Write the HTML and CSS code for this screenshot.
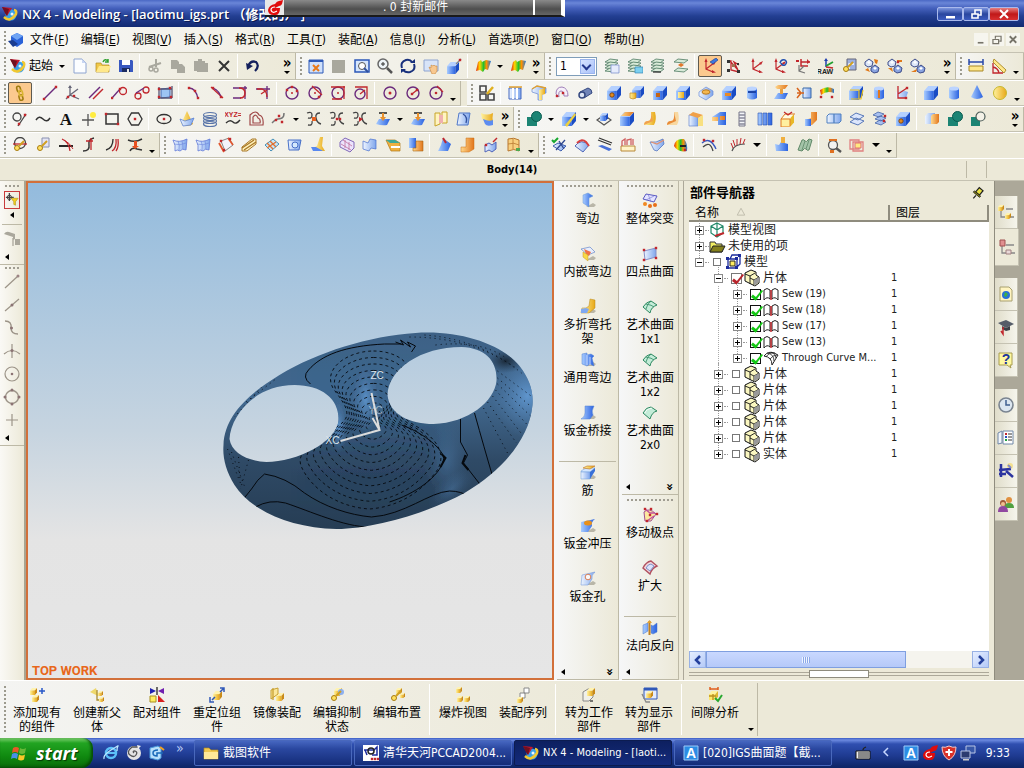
FILE: index.html
```html
<!DOCTYPE html>
<html lang="zh-CN">

<head>
    <meta charset="utf-8">
    <title>NX 4 - Modeling</title>

    <link rel="stylesheet" href="styles.css">
</head>

<body>
    <!-- shared gradients -->
    <svg class="defs" aria-hidden="true">
        <defs>
            <linearGradient id="blue"><stop offset="0" stop-color="#a8ccff"/><stop offset="1" stop-color="#2a62e0"/></linearGradient>
            <linearGradient id="pale"><stop offset="0" stop-color="#eef5ff"/><stop offset="1" stop-color="#7fa6ec"/></linearGradient>
            <linearGradient id="gold"><stop offset="0" stop-color="#fff2a0"/><stop offset="1" stop-color="#e8a818"/></linearGradient>
            <linearGradient id="orange"><stop offset="0" stop-color="#ffd88c"/><stop offset="1" stop-color="#e2761c"/></linearGradient>
            <linearGradient id="rain"><stop offset="0" stop-color="#e02010"/><stop offset=".25" stop-color="#ffd800"/><stop offset=".5" stop-color="#20c030"/><stop offset=".7" stop-color="#ff9000"/><stop offset="1" stop-color="#1878e0"/></linearGradient>
        </defs>
    </svg>

    <header class="titlebar">
        <i data-icon="nx"></i>
        <h1>NX 4 - Modeling - [laotimu_igs.prt （修改的） ]</h1>
        <div class="window-buttons">
            <button aria-label="Minimize"><i data-icon="wmin"></i></button>
            <button aria-label="Restore"><i data-icon="wrestore"></i></button>
            <button class="close" aria-label="Close"><i data-icon="wclose"></i></button>
        </div>
        <div class="mail-popup">
            <i data-icon="redg"></i>
            <span>. 0 封新邮件</span>
        </div>
    </header>

    <nav class="menubar">
        <span class="grip"></span>
        <i data-icon="part"></i>
        <button>文件(<u>F</u>)</button>
        <button>编辑(<u>E</u>)</button>
        <button>视图(<u>V</u>)</button>
        <button>插入(<u>S</u>)</button>
        <button>格式(<u>R</u>)</button>
        <button>工具(<u>T</u>)</button>
        <button>装配(<u>A</u>)</button>
        <button>信息(<u>I</u>)</button>
        <button>分析(<u>L</u>)</button>
        <button>首选项(<u>P</u>)</button>
        <button>窗口(<u>O</u>)</button>
        <button>帮助(<u>H</u>)</button>
        <div class="mdi-buttons">
            <button aria-label="Minimize document"><i data-icon="mmin"></i></button>
            <button aria-label="Restore document"><i data-icon="mrestore"></i></button>
            <button aria-label="Close document"><i data-icon="mclose"></i></button>
        </div>
    </nav>

    <div class="toolrow first">
        <div class="toolbar loose" data-items="new open save | cut copy paste del | undo more">
            <span class="grip"></span>
            <button class="start-menu"><i data-icon="nx"></i>起始<b class="arrow"></b></button>
        </div>
        <div class="toolbar" data-items="fit gray zoomrect magnify rotate pan shade | rainbow v rainbow more">
            <span class="grip"></span>
        </div>
        <div class="toolbar fill" data-items="layer1 layer2 layer3 layer4 | *wcsdyn wcsbox wcs wcsrot wcsori wcssave wcskey swap1 swap2 swap3 more">
            <span class="grip"></span>
            <label class="layer-box" aria-label="Work layer"><select><option>1</option></select></label>
        </div>
        <div class="toolbar" data-items="measure angle v">
            <span class="grip"></span>
        </div>
    </div>

    <div class="toolrow">
        <div class="toolbar gap" data-items="*link | line ucs parallel tan1 tan2 boxpts | arc1 arc2 corner corner2 | circ1 circ2 circ3 circ4 | circ5 circ6 circ7 v">
            <span class="grip"></span>
        </div>
        <div class="toolbar fill" data-items="sketch | extrude revolve sweep tube | hole boss pocket pad slot groove cyl3 | rib flangec thru | shell thread wcsp | block cyl cone sphere v">
            <span class="grip"></span>
        </div>
    </div>

    <div class="toolrow">
        <div class="toolbar" data-items="circline spline text point rect hex | ellipse conic helix xyz offset bridge v join1 join2 join3 proj v proj wrap section fold more">
            <span class="grip"></span>
        </div>
        <div class="toolbar fill" data-items="union v draft v diamond edge blend1 blend2 chamf trimb slab split emb pipe sheet1 sheet2 stack hole | unite1 union subtract more">
            <span class="grip"></span>
        </div>
    </div>

    <div class="toolrow">
        <div class="toolbar" data-items="editc editp trimc divide arcs stretch v">
            <span class="grip"></span>
        </div>
        <div class="toolbar" data-items="surf surf surfr ribbon mesh swept nsided | quilt surf2 sheetb copyb | fill1 orange surfv sheetq v">
            <span class="grip"></span>
        </div>
        <div class="toolbar" data-items="chk cap tracks comb | bend ball | curvea | comb2 V | pullb wave | loupe sq V v">
            <span class="grip"></span>
        </div>
    </div>

    <div class="statusbar">
        <span class="status-text">Body(14)</span>
        <span class="status-cell"></span>
        <span class="status-cell last"></span>
    </div>

    <main>
        <aside class="snapbar">
            <div class="snap-group">
                <span class="grip-h"></span>
                <button class="framed" aria-label="Filter"><i data-icon="filter"></i></button>
                <b class="left-arrow"></b>
                <hr>
                <button aria-label="Selection"><i data-icon="graytool"></i></button>
                <b class="left-arrow start"></b>
            </div>
            <div class="snap-group points">
                <span class="grip-h"></span>
                <button aria-label="End point"><i data-icon="s1"></i></button>
                <button aria-label="Mid point"><i data-icon="s2"></i></button>
                <button aria-label="Control point"><i data-icon="s3"></i></button>
                <button aria-label="Intersection"><i data-icon="s4"></i></button>
                <button aria-label="Arc center"><i data-icon="s5"></i></button>
                <button aria-label="Quadrant point"><i data-icon="s6"></i></button>
                <button aria-label="Existing point"><i data-icon="s7"></i></button>
                <b class="left-arrow start"></b>
            </div>
        </aside>

        <section class="viewport">
            <svg viewBox="29 184 523 495">
                <defs>
                    <linearGradient id="skin" x1="0" y1="0" x2="0" y2="1">
                        <stop offset="0" stop-color="#3d6186"/><stop offset=".35" stop-color="#41688f"/>
                        <stop offset=".65" stop-color="#2f4a66"/><stop offset="1" stop-color="#263d54"/>
                    </linearGradient>
                    <radialGradient id="shine"><stop offset="0" stop-color="#5f95cd"/><stop offset="1" stop-color="#4c79a8" stop-opacity="0"/></radialGradient>
                    <radialGradient id="dark"><stop offset="0" stop-color="#1b2a3a"/><stop offset="1" stop-color="#243a50" stop-opacity="0"/></radialGradient>
                    <path id="body" clip-rule="evenodd" d="M224 446C225 415 252 393 280 376C318 353 370 337 416 334C462 331 503 346 520 367C530 380 534 392 533 406C530 439 504 471 465 494C430 513 375 530 337 530C290 529 251 511 235 486C226 471 223 458 224 446ZM230 440C231 418 254 386 295 386C323 386 340 401 339 421C338 443 297 463 267 463C248 462 232 454 230 440ZM388 396C389 370 421 348 462 348C486 349 498 362 497 382C495 402 469 424 434 425C411 425 390 416 388 396Z"/>
                    <clipPath id="clip"><use href="#body"/></clipPath>
                </defs>
                <use href="#body" fill="url(#skin)" fill-rule="evenodd"/>
                <g clip-path="url(#clip)">
                    <ellipse cx="528" cy="397" rx="36" ry="42" fill="url(#shine)"/>
                    <ellipse cx="366" cy="400" rx="13" ry="34" fill="url(#shine)" opacity=".9"/>
                    <ellipse cx="339" cy="428" rx="9" ry="26" fill="url(#shine)"/>
                    <ellipse cx="506" cy="362" rx="20" ry="12" fill="url(#dark)"/>
                    <ellipse cx="447" cy="461" rx="22" ry="40" fill="url(#shine)" opacity=".35"/>
                    <ellipse cx="452" cy="490" rx="28" ry="13" fill="url(#shine)" opacity=".3" transform="rotate(-40 452 490)"/>
                    <g id="contours" class="contours"></g>
                    <path class="crease" d="M244 500L252 490Q258 480 265 475Q286 478 305 494C325 508 350 516 372 518C405 516 430 493 450 492Q462 492 470 498M256 508Q270 500 286 504C310 512 345 528 370 528M311 385Q302 378 309 371C322 356 345 347 385 345L402 345"/>
                    <path class="crease" d="M402 426C425 434 446 452 444 461C440 478 415 495 390 503M461 420V443L468 456L464 464L481 486M461 420M475 414Q485 450 493 477"/>
                    <path class="crease heavy" d="M442 455L446 459L441 468M466 456L463 464L469 471"/>
                    <path class="crease" d="M396 343L404 346L401 341L411 348L408 343L416 347L412 353"/>
                    <path class="dots" d="M410 338Q470 338 515 368M425 336Q480 340 522 374M436 346Q480 341 505 358M498 379L532 408M498 385L531 417M496 391L528 426M493 397L523 436M488 403L517 444M484 409L508 454M498 372L533 398M228 450L240 482M232 453L246 490M239 458L241 488M249 461L241 490M262 388L235 418M275 381L244 405"/>
                </g>
                <path class="axis" d="M372 394L380 431L341 442M373 419L380 431"/>
                <g class="axis-labels">
                    <text x="371" y="380">ZC</text>
                    <text x="369" y="415" opacity=".6">YC</text>
                    <text x="326" y="445">XC</text>
                </g>
            </svg>
            <span class="view-name">TOP WORK</span>
        </section>

        <div class="tilebar">
            <div class="tile-group grow">
                <span class="grip-h"></span>
                <button class="tile"><i data-icon="flange"></i>弯边</button>
                <button class="tile"><i data-icon="inset"></i>内嵌弯边</button>
                <button class="tile"><i data-icon="bracket"></i>多折弯托架</button>
                <button class="tile"><i data-icon="genflange"></i>通用弯边</button>
                <button class="tile"><i data-icon="smbridge"></i>钣金桥接</button>
                <hr>
                <button class="tile"><i data-icon="bead"></i>筋</button>
                <button class="tile"><i data-icon="punch"></i>钣金冲压</button>
                <button class="tile"><i data-icon="smhole"></i>钣金孔</button>
                <div class="tile-foot"><b class="left-arrow"></b><b class="down-more">»</b></div>
            </div>
        </div>

        <div class="tilebar second">
            <div class="tile-group upper">
                <span class="grip-h"></span>
                <button class="tile"><i data-icon="global"></i>整体突变</button>
                <button class="tile"><i data-icon="fourpt"></i>四点曲面</button>
                <button class="tile"><i data-icon="studio"></i>艺术曲面<br>1x1</button>
                <button class="tile"><i data-icon="studio"></i>艺术曲面<br>1x2</button>
                <button class="tile"><i data-icon="studio2"></i>艺术曲面<br>2x0</button>
                <div class="tile-foot"><b class="left-arrow"></b><b class="down-more">»</b></div>
            </div>
            <div class="tile-group grow">
                <span class="grip-h"></span>
                <button class="tile keep"><i data-icon="poles"></i>移动极点</button>
                <button class="tile keep"><i data-icon="enlarge"></i>扩大</button>
                <hr>
                <button class="tile"><i data-icon="normals"></i>法向反向</button>
                <div class="tile-foot"><b class="left-arrow"></b></div>
            </div>
        </div>

        <section class="navigator">
            <h2>部件导航器 <i data-icon="pin"></i></h2>
            <div class="tree">
                <table>
                    <thead>
                        <tr><th class="name">名称 <i data-icon="sort"></i></th><th>图层</th></tr>
                    </thead>
                    <tbody>
                        <tr><td><div class="node"><button class="exp" aria-label="Expand"></button><i data-icon="views"></i>模型视图</div></td><td></td></tr>
                        <tr><td><div class="node"><button class="exp" aria-label="Expand"></button><i data-icon="folder2"></i>未使用的项</div></td><td></td></tr>
                        <tr><td><div class="node"><button class="exp open" aria-label="Collapse"></button><label><input type="checkbox"><i data-icon="model"></i>模型</label></div></td><td></td></tr>
                        <tr class="lvl1"><td><div class="node"><button class="exp open" aria-label="Collapse"></button><label><input type="checkbox" class="red" checked><i data-icon="solid"></i>片体</label></div></td><td>1</td></tr>
                        <tr class="lvl2"><td><div class="node"><button class="exp" aria-label="Expand"></button><label><input type="checkbox" checked><i data-icon="sew"></i>Sew (19)</label></div></td><td>1</td></tr>
                        <tr class="lvl2"><td><div class="node"><button class="exp" aria-label="Expand"></button><label><input type="checkbox" checked><i data-icon="sew"></i>Sew (18)</label></div></td><td>1</td></tr>
                        <tr class="lvl2"><td><div class="node"><button class="exp" aria-label="Expand"></button><label><input type="checkbox" checked><i data-icon="sew"></i>Sew (17)</label></div></td><td>1</td></tr>
                        <tr class="lvl2"><td><div class="node"><button class="exp" aria-label="Expand"></button><label><input type="checkbox" checked><i data-icon="sew"></i>Sew (13)</label></div></td><td>1</td></tr>
                        <tr class="lvl2"><td><div class="node"><button class="exp" aria-label="Expand"></button><label><input type="checkbox" checked><i data-icon="tcm"></i>Through Curve M...</label></div></td><td>1</td></tr>
                        <tr class="lvl1"><td><div class="node"><button class="exp" aria-label="Expand"></button><label><input type="checkbox"><i data-icon="solid"></i>片体</label></div></td><td>1</td></tr>
                        <tr class="lvl1"><td><div class="node"><button class="exp" aria-label="Expand"></button><label><input type="checkbox"><i data-icon="solid"></i>片体</label></div></td><td>1</td></tr>
                        <tr class="lvl1"><td><div class="node"><button class="exp" aria-label="Expand"></button><label><input type="checkbox"><i data-icon="solid"></i>片体</label></div></td><td>1</td></tr>
                        <tr class="lvl1"><td><div class="node"><button class="exp" aria-label="Expand"></button><label><input type="checkbox"><i data-icon="solid"></i>片体</label></div></td><td>1</td></tr>
                        <tr class="lvl1"><td><div class="node"><button class="exp" aria-label="Expand"></button><label><input type="checkbox"><i data-icon="solid"></i>片体</label></div></td><td>1</td></tr>
                        <tr class="lvl1"><td><div class="node"><button class="exp" aria-label="Expand"></button><label><input type="checkbox"><i data-icon="solid"></i>实体</label></div></td><td>1</td></tr>
                    </tbody>
                </table>
                <div class="scrollbar">
                    <button aria-label="Scroll left"><i data-icon="chevl"></i></button>
                    <div class="track"><div class="thumb"></div></div>
                    <button aria-label="Scroll right"><i data-icon="chevr"></i></button>
                </div>
            </div>
            <div class="splitter"><span></span></div>
        </section>

        <nav class="resource-tabs">
            <button aria-label="Assembly navigator"><i data-icon="asmnav"></i></button>
            <button class="active" aria-label="Part navigator"><i data-icon="partnav"></i></button>
            <span class="space"></span>
            <button aria-label="Web"><i data-icon="web"></i></button>
            <button aria-label="Training"><i data-icon="cap2"></i></button>
            <button aria-label="Help"><i data-icon="help"></i></button>
            <span class="space"></span>
            <button aria-label="History"><i data-icon="clock"></i></button>
            <button aria-label="Palette"><i data-icon="palette"></i></button>
            <button aria-label="Tools"><i data-icon="jack"></i></button>
            <button aria-label="Roles"><i data-icon="people"></i></button>
        </nav>
    </main>

    <div class="assembly-bar">
        <span class="grip"></span>
        <button class="tile"><i data-icon="addcomp"></i>添加现有的组件</button>
        <button class="tile"><i data-icon="parent"></i>创建新父体</button>
        <button class="tile"><i data-icon="mate"></i>配对组件</button>
        <button class="tile"><i data-icon="repos"></i>重定位组件</button>
        <button class="tile"><i data-icon="mirror"></i>镜像装配</button>
        <button class="tile"><i data-icon="suppress"></i>编辑抑制状态</button>
        <button class="tile"><i data-icon="arrange"></i>编辑布置</button>
        <span class="sep"></span>
        <button class="tile"><i data-icon="explode"></i>爆炸视图</button>
        <button class="tile"><i data-icon="sequence"></i>装配序列</button>
        <span class="sep"></span>
        <button class="tile"><i data-icon="workpart"></i>转为工作部件</button>
        <button class="tile"><i data-icon="disppart"></i>转为显示部件</button>
        <span class="sep"></span>
        <button class="tile"><i data-icon="clearance"></i>间隙分析</button>
        <b class="arrow"></b>
        <span class="bar-end"></span>
    </div>

    <footer class="taskbar">
        <button class="start"><i data-icon="winflag"></i>start</button>
        <div class="quick">
            <button aria-label="Internet"><i data-icon="ie"></i></button>
            <button aria-label="Media"><i data-icon="swirl"></i></button>
            <button aria-label="Mail"><i data-icon="outlook"></i></button>
            <span>»</span>
        </div>
        <button class="task"><i data-icon="folder"></i><span>截图软件</span></button>
        <button class="task"><i data-icon="pccad"></i><span>清华天河PCCAD2004...</span></button>
        <button class="task current"><i data-icon="nx"></i><span>NX 4 - Modeling - [laoti...</span></button>
        <button class="task"><i data-icon="bluea"></i><span>[020]IGS曲面题【截...</span></button>
        <div class="tray">
            <i data-icon="keyboard"></i>
            <button aria-label="Show hidden icons"><i data-icon="trayleft"></i></button>
            <i data-icon="bluea"></i>
            <i data-icon="redg"></i>
            <i data-icon="shield"></i>
            <i data-icon="network"></i>
            <time>9:33</time>
        </div>
    </footer>

    <script src="script.js"></script>
</body>

</html>
```

FILE: styles.css
```css
* {
    box-sizing: border-box;
}

body {
    display: flex;
    flex-direction: column;
    height: 100vh;
    margin: 0;
    overflow: hidden;
    background-color: #ece9d8;
    color: #000;
    font-family: "DejaVu Sans Condensed", "Noto Sans CJK SC", sans-serif;
    font-size: 12px;
    line-height: 14px;
}

button {
    padding: 0;
    border: none;
    background: none;
    color: inherit;
    font: inherit;
}

i {
    display: inline-flex;
    flex: none;
    font-style: normal;
}

i svg {
    width: 16px;
    height: 16px;
    overflow: visible;
}

.defs {
    position: absolute;
    width: 0;
    height: 0;
}

/* Title bar */
.titlebar {
    position: relative;
    display: flex;
    align-items: center;
    gap: 4px;
    flex: none;
    height: 27px;
    padding: 0 5px 0 2px;
    background: linear-gradient(#4a68c4, #6a86d8 3px, #4561bd 8px, #233f92 16px, #122a72);
    color: #fff;
}

.titlebar h1 {
    flex: 1;
    margin: 0;
    font-family: "Open Sans", "Noto Sans CJK SC", sans-serif;
    font-size: 13px;
    font-weight: 600;
    line-height: 20px;
    white-space: nowrap;
    text-shadow: 1px 1px #0a1850;
}

.window-buttons {
    display: flex;
}

.window-buttons button {
    display: flex;
    align-items: center;
    justify-content: center;
    width: 26px;
    height: 14px;
    border: 1px solid #a9b9ec;
    border-radius: 2px;
    background: linear-gradient(#7d96df, #2a479f 50%, #3c5cc0);
}

.window-buttons .close {
    width: 30px;
    background: linear-gradient(#e88080, #c01818 50%, #d83030);
}

.mail-popup {
    position: absolute;
    top: 0;
    left: 265px;
    display: flex;
    width: 300px;
    height: 17px;
    border: solid #fff;
    border-width: 0 4px 2px 0;
    border-bottom-color: #1a1a1a;
    background: linear-gradient(#8a8a8a, #4e4e4e 60%, #666);
    font-size: 12px;
}

.mail-popup i {
    width: 19px;
    padding-left: 2px;
    background: #e8e8e8;
}

.mail-popup::after {
    content: "";
    width: 2px;
    margin-left: 85px;
    background: #fff;
}

.mail-popup span {
    padding-left: 99px;
}

/* Menu bar */
.menubar {
    display: flex;
    align-items: center;
    flex: none;
    height: 26px;
    padding-right: 4px;
    border-bottom: 1px solid #c5c2b2;
    background: linear-gradient(90deg, #f8f8f6, #ece9d8 50%);
}

.menubar > button {
    padding: 0 6px;
    white-space: nowrap;
}

.mdi-buttons {
    display: flex;
    gap: 2px;
    margin-left: auto;
}

.mdi-buttons button {
    width: 14px;
    height: 13px;
    background: #f6f5ee;
}

.mdi-buttons svg {
    width: 14px;
    height: 13px;
}

/* Toolbars */
.toolrow {
    display: flex;
    flex: none;
    height: 26px;
    border-bottom: 1px solid #fff;
}

.toolrow.first {
    height: 28px;
}

.toolbar {
    display: flex;
    align-items: center;
    flex: none;
    padding-right: 1px;
    border-right: 1px solid #bdb9a6;
    border-bottom: 1px solid #c5c2b2;
    background: linear-gradient(90deg, #f6f6f4, #ece9d8);
}

.toolbar.fill {
    flex: 1;
}

.toolbar.gap {
    margin-right: 6px;
}

.toolbar.loose .more {
    margin-left: 16px;
}

.toolbar.fill .more {
    margin-left: auto;
}

.grip {
    flex: none;
    width: 3px;
    height: 18px;
    margin: 0 1px 0 4px;
    background: radial-gradient(circle at 1px 1px, #9c9a8e 1px, transparent 1px) 0 0 / 3px 4px;
}

.ic {
    display: flex;
    align-items: center;
    justify-content: center;
    flex: none;
    width: 23px;
    height: 22px;
}

.ic.on {
    width: 24px;
    border: 1px solid #5e5a50;
    border-radius: 2px;
    background: #fbc98e;
}

.sep {
    align-self: stretch;
    flex: none;
    width: 1px;
    margin: 1px 3px 1px 2px;
    background: #fff;
}

.arrow {
    display: flex;
    justify-content: center;
    align-items: center;
    flex: none;
    width: 12px;
    height: 16px;
}

.arrow::after {
    content: "";
    border: 3px solid transparent;
    border-top-color: #000;
    border-bottom: none;
}

.arrow.big {
    width: 15px;
}

.arrow.big::after {
    border-width: 4px 4px 0;
}

.arrow.low {
    align-items: flex-end;
}

.more {
    display: flex;
    flex-direction: column;
    align-items: center;
    gap: 4px;
    flex: none;
    width: 14px;
    font-size: 15px;
    font-weight: bold;
    line-height: 8px;
}

.more::after {
    content: "";
    border: 3px solid transparent;
    border-top-color: #000;
    border-bottom: none;
}

.start-menu {
    display: flex;
    align-items: center;
    gap: 3px;
    padding-left: 2px;
}

.layer-box {
    position: relative;
    margin: 0 3px;
}

.layer-box select {
    display: block;
    width: 41px;
    height: 19px;
    padding: 0 3px;
    border: 1px solid #7f9db9;
    border-radius: 0;
    appearance: none;
    color: #000;
    font: inherit;
    background: #fff;
}

.layer-box::before {
    content: "";
    position: absolute;
    top: 2px;
    right: 2px;
    width: 15px;
    height: 15px;
    background: linear-gradient(135deg, #dbe6ff, #a6bff8);
    box-shadow: inset 0 0 0 1px #9ab4ee;
    pointer-events: none;
}

.layer-box::after {
    content: "";
    position: absolute;
    top: 5px;
    right: 7px;
    width: 5px;
    height: 5px;
    border: solid #24388c;
    border-width: 0 2px 2px 0;
    transform: rotate(45deg);
    pointer-events: none;
}

/* lettering inside icons */
.letter-serif {
    font: bold 17px "Liberation Serif", serif;
}

.letter-sans {
    font: bold 14px "Liberation Sans", sans-serif;
}

.letter-small {
    font: bold 7px "Liberation Sans", sans-serif;
}

/* Status line */
.statusbar {
    display: flex;
    align-items: center;
    flex: none;
    height: 22px;
    font-size: 11px;
    font-weight: bold;
    border-bottom: 1px solid #c5c2b2;
}

.status-text {
    flex: 1;
    padding-left: 58px;
    text-align: center;
}

.status-cell {
    width: 20px;
    height: 17px;
    border-left: 1px solid #bdb9a6;
}

.status-cell.last {
    width: 38px;
}

/* Main area */
main {
    display: flex;
    flex: 1;
    min-height: 0;
    border-bottom: 1px solid #fff;
}

hr {
    flex: none;
    width: calc(100% - 4px);
    margin: 3px 2px;
    border: none;
    border-top: 1px solid #bdb9a6;
}

.grip-h {
    flex: none;
    align-self: stretch;
    height: 2px;
    margin: 4px 5px;
    background: repeating-linear-gradient(90deg, #a09d92 0 2px, transparent 2px 4px);
}

.left-arrow {
    border: 3px solid transparent;
    border-right: 4px solid #000;
    border-left: none;
}

.snapbar {
    flex: none;
    width: 26px;
    border-right: 2px solid #a8a592;
    background: linear-gradient(90deg, #faf9f5, #ece9d8);
}

.snap-group {
    display: flex;
    flex-direction: column;
    align-items: center;
    border-bottom: 1px solid #bdb9a6;
}

.snap-group button {
    display: flex;
    align-items: center;
    justify-content: center;
    width: 16px;
    height: 23px;
}

.snap-group .framed {
    height: 18px;
    margin-bottom: 3px;
    border: 1px solid #c83c3c;
}

.snap-group .framed svg {
    width: 14px;
    height: 14px;
}

.snap-group hr {
    margin: 6px 2px 2px;
}

.snap-group .start {
    align-self: flex-start;
    margin: 4px 5px;
}

.points .grip-h {
    margin: 2px 5px 1px;
}

.viewport {
    position: relative;
    flex: 1;
    min-width: 0;
    border: 2px solid #d2703a;
    background: linear-gradient(#93bbdd, #c6d4e0 50%, #e4e4e4 72%, #e6e6e6);
}

.viewport > svg {
    display: block;
    width: 100%;
    height: 100%;
}

.view-name {
    position: absolute;
    left: 4px;
    bottom: 0;
    color: #e8671a;
    font-family: Roboto, sans-serif;
    font-size: 13px;
    font-weight: bold;
}

.contours path {
    fill: none;
    stroke: #04080c;
    stroke-dasharray: 3 3;
    opacity: .85;
    vector-effect: non-scaling-stroke;
}

.crease {
    fill: none;
    stroke: #05090e;
}

.crease.heavy {
    stroke-width: 2;
}

.dots {
    fill: none;
    stroke: #0a121c;
    stroke-dasharray: 1 4;
}

.axis {
    fill: none;
    stroke: #dcdcdc;
    stroke-width: 2;
}

.axis-labels {
    fill: #dce4ea;
    font: 10px "Liberation Sans", sans-serif;
}

/* Icon + caption buttons */
.tile {
    display: flex;
    flex-direction: column;
    align-items: center;
    flex: 0 1 53px;
    width: 52px;
    min-height: 0;
    line-height: 14px;
    text-align: center;
}

.tile.keep {
    flex-shrink: 0;
}

.tile i {
    margin-bottom: 3px;
}

.tilebar {
    display: flex;
    flex-direction: column;
    flex: none;
    width: 65px;
    padding-left: 3px;
    background: linear-gradient(90deg, #f6f7f8, #ece9d8);
    border-right: 1px solid #bdb9a6;
}

.tilebar.second {
    width: 60px;
}

.tile-group {
    display: flex;
    flex-direction: column;
    align-items: center;
    border-bottom: 1px solid #bdb9a6;
}

.tile-group .grip-h {
    margin-bottom: 6px;
}

.tile-group.upper {
    flex: none;
    height: 314px;
}

.tile-group.grow {
    flex: 1;
    min-height: 0;
}

.tile-foot {
    display: flex;
    align-items: center;
    justify-content: space-between;
    align-self: stretch;
    flex: none;
    height: 14px;
    margin-top: auto;
    padding: 0 4px;
}

.down-more {
    width: 8px;
    height: 8px;
    font-size: 13px;
    line-height: 7px;
    text-align: center;
    transform: rotate(90deg);
}

/* Part navigator */
.navigator {
    display: flex;
    flex-direction: column;
    flex: none;
    width: 312px;
    margin-left: 4px;
    padding: 0 5px;
    border-left: 1px solid #aca899;
    border-right: 1px solid #8f8c7e;
}

.navigator h2 {
    display: flex;
    justify-content: space-between;
    align-items: center;
    height: 24px;
    margin: 0;
    padding: 0 5px 0 1px;
    font-size: 13px;
}

.navigator h2 svg {
    width: 13px;
    height: 13px;
}

.tree {
    display: flex;
    flex-direction: column;
    flex: 1;
    background: #fff;
}

.tree table {
    width: 100%;
    border-collapse: collapse;
    table-layout: fixed;
}

.tree th {
    height: 16px;
    padding: 0 6px;
    border: solid #8f8c7e;
    border-width: 0 2px 2px 0;
    background: #ece9d8;
    font-weight: normal;
    text-align: left;
}

.tree .name {
    width: 200px;
}

.tree .name i {
    margin-left: 14px;
}

.tree .name svg {
    width: 10px;
    height: 10px;
}

.tree td {
    height: 16px;
    padding: 0 0 0 1px;
    color: #222;
    line-height: 16px;
}

.tree td:last-child,
.lvl2 .node {
    font-size: 11px;
}

.tree td:last-child {
    padding-left: 2px;
}

.node {
    display: flex;
    align-items: center;
    gap: 5px;
    height: 16px;
    padding-left: 5px;
    white-space: nowrap;
}

.node > i {
    margin-right: -2px;
}

.node label {
    display: flex;
    align-items: center;
    gap: 3px;
    padding-left: 4px;
}

.lvl1 .node {
    padding-left: 24px;
}

.lvl2 .node {
    padding-left: 43px;
}

.lvl2 td:first-child {
    background: repeating-linear-gradient(#aaa 0 1px, #fff 1px 2px) 29px 0 / 1px 100% no-repeat;
}

/* the plus sign is two one-pixel bars */
.exp {
    position: relative;
    width: 9px;
    height: 9px;
    border: 1px solid #8a8a8a;
    background:
        linear-gradient(#000, #000) 50% 50% / 5px 1px no-repeat,
        linear-gradient(#000, #000) 50% 50% / 1px 5px no-repeat,
        #fff;
}

.exp.open {
    background: linear-gradient(#000, #000) 50% 50% / 5px 1px no-repeat, #fff;
}

.exp::before {
    content: "";
    position: absolute;
    top: -8px;
    left: 3px;
    height: 7px;
    border-left: 1px dotted #999;
}

.exp::after {
    content: "";
    position: absolute;
    top: 3px;
    left: 9px;
    width: 4px;
    border-top: 1px dotted #999;
}

.node input {
    position: relative;
    width: 8px;
    height: 8px;
    margin: 0 1px 0 0;
    border: 1px solid #777;
    appearance: none;
}

.node input:checked {
    width: 11px;
    height: 11px;
    margin-left: -1px;
    margin-right: -1px;
    border-color: #111;
}

.node input:checked::after {
    content: "";
    position: absolute;
    top: -2px;
    left: 3px;
    width: 4px;
    height: 9px;
    border: solid #14c814;
    border-width: 0 2px 3px 0;
    transform: rotate(38deg);
}

.node input.red:checked {
    border-color: #777;
}

.node input.red:checked::after {
    border-color: #b8242c;
}

.scrollbar {
    display: flex;
    height: 17px;
    margin-top: auto;
}

.scrollbar button {
    display: flex;
    align-items: center;
    justify-content: center;
    width: 17px;
    border: 1px solid #98b1e4;
    background: linear-gradient(135deg, #e6eeff, #b4caf8);
}

.track {
    flex: 1;
    background: #f5f4ee;
}

.thumb {
    width: 75%;
    height: 17px;
    border: 1px solid #7f9fe0;
    background: repeating-linear-gradient(90deg, #eef4ff 0 1px, #8ca8e8 1px 2px) 50% 50% / 8px 6px no-repeat, linear-gradient(#c9d8ff, #b5c9f8);
}

.splitter {
    display: flex;
    align-items: center;
    justify-content: center;
    height: 12px;
    background: linear-gradient(#aca899 1px, transparent 1px 3px, #aca899 3px 4px, transparent 4px) 0 4px no-repeat;
}

.splitter span {
    width: 60px;
    height: 8px;
    border: 1px solid #8f8c7e;
    background: #fff;
}

.resource-tabs {
    display: flex;
    flex-direction: column;
    flex: none;
    width: 29px;
    padding-top: 15px;
    background: #aca899;
}

.resource-tabs button {
    display: flex;
    align-items: center;
    justify-content: center;
    flex: none;
    width: 23px;
    height: 33px;
    border: solid #c5c2b2;
    border-width: 0 1px 1px 0;
    background: linear-gradient(90deg, #e0ddca, #f6f5ec);
}

.resource-tabs .active {
    width: 24px;
    height: 37px;
    background: #ece9d8;
}

.resource-tabs .space {
    height: 12px;
}

/* Assemblies toolbar */
.assembly-bar {
    display: flex;
    flex: none;
    height: 57px;
    padding: 2px 0;
    background: linear-gradient(90deg, #f4f4f2, #ece9d8 60%);
}

.assembly-bar .grip {
    height: 48px;
    margin: 3px 0 0 4px;
}

.assembly-bar .tile {
    flex: none;
    width: 60px;
    height: 53px;
    padding: 4px 4px 0;
}

.assembly-bar .arrow {
    align-self: flex-end;
    width: 12px;
    height: 14px;
}

.bar-end {
    border-right: 1px solid #bdb9a6;
}

/* Taskbar */
.taskbar {
    display: flex;
    align-items: center;
    flex: none;
    height: 30px;
    padding-right: 14px;
    background: linear-gradient(#3a5cc4, #6c8ae0 2px, #2f4fb0 6px, #1e3a90 18px, #0d2464);
    color: #fff;
}

.taskbar .start {
    display: flex;
    align-items: center;
    gap: 9px;
    width: 93px;
    height: 30px;
    padding-left: 11px;
    border-radius: 0 10px 12px 0;
    background: linear-gradient(#7ed070, #22a422 5px, #108a10 18px, #0a6c0a);
    box-shadow: inset -2px -1px 3px #064806;
    font-family: "Open Sans", sans-serif;
    font-size: 18px;
    font-style: italic;
    font-weight: bold;
    text-shadow: 1px 1px 1px #043804;
}

.quick {
    display: flex;
    align-items: center;
    gap: 7px;
    width: 101px;
    padding-left: 10px;
}

.quick span {
    margin: 0 0 10px 4px;
    font-size: 14px;
    color: #b8c8f4;
}

.quick button {
    height: 16px;
}

.task {
    display: flex;
    align-items: center;
    gap: 4px;
    width: 158px;
    height: 26px;
    margin-right: 2px;
    padding: 0 8px;
    border: 1px solid #4968bc;
    border-radius: 2px;
    background: linear-gradient(#4666c0, #2a479f 8px, #142c78);
    white-space: nowrap;
}

.task.current {
    border-color: #0c1c50;
    background: linear-gradient(#0d2060, #142b7c);
    font-size: 11px;
}

.tray {
    display: flex;
    align-items: center;
    gap: 3px;
    margin-left: auto;
}

.tray i:first-child {
    margin-right: 4px;
}

.tray button {
    margin-right: 2px;
}

.tray time {
    padding-left: 7px;
    font-size: 12px;
}
```

FILE: script.js
```js
const RED = '#c1272d', PURPLE = '#6b2a7c', INK = '#222';

// drawing helpers, every icon lives in a 16x16 box
const p = (d, fill = 'none', stroke = 'none', w = 1) =>
    `<path d="${d}" fill="${fill}" stroke="${stroke}" stroke-width="${w}"/>`;
const ln = (d, stroke = PURPLE, w = 1.3) => p(d, 'none', stroke, w);
const c = (x, y, r, fill = 'none', stroke = 'none', w = 1) =>
    `<circle cx="${x}" cy="${y}" r="${r}" fill="${fill}" stroke="${stroke}" stroke-width="${w}"/>`;
const letter = (str, x, y, fill, cls) =>
    `<text x="${x}" y="${y}" fill="${fill}" text-anchor="middle" class="letter-${cls}">${str}</text>`;
const dots = (...xy) => xy.map(([x, y]) => p(`M${x - 1.2} ${y - 1.2}h2.4v2.4h-2.4z`, RED)).join('');
const box = (x, y, s, front, top, side) =>
    p(`M${x} ${y + s * .35}l${s * .3}-${s * .35}h${s * .7}l-${s * .3} ${s * .35}z`, top) +
    p(`M${x} ${y + s * .35}h${s * .7}v${s * .65}h-${s * .7}z`, front) +
    p(`M${x + s * .7} ${y + s * .35}l${s * .3}-${s * .35}v${s * .65}l-${s * .3} ${s * .35}z`, side);
const cube = (x = 1, y = 1, s = 14) => box(x, y, s, 'url(#blue)', '#b4d0ff', '#1a4cc4');
const gold = (x, y, s) => box(x, y, s, 'url(#gold)', '#fff3b0', '#c98a18');
const shadow = p('M6 14l8 0 2-2-3-2z', '#b9b6a8');
const axes = ln('M4 2v9l7 3M4 11l8-6', RED, 1.2) + p('M2.500 4L4 0l1.500 4zM10 12l4 2.500-4 .5zM10 5l4-2-2 4z', RED);
const cylinder = (fill = 'url(#blue)') => p('M3 3v10q5 3 10 0V3z', fill) + `<ellipse cx="8" cy="3.500" rx="5" ry="2" fill="#bcd4ff"/>`;
const circ = c(8, 8, 6, 'none', PURPLE, 1.4);
const layers = [2, 5, 8, 11].map(y => p(`M1 ${y + 2}l5-3 8 1-4 3z`, '#d8ead8', '#4e7a62', .8)).join('');
const stack2 = p('M1 4l4-3 4 3-1 4-4 1-3-2z', '#dce6f8', '#3c4c8a') + p('M7 10l4-3 4 3-1 4-4 1-3-2z', '#8aa4e0', '#3c4c8a') + p('M3 4l2-1 2 1-2 2zM9 10l2-1 2 1-2 2z', '#fff');
const joinLines = ln('M1 2Q6 0 6 4T2 7M2 14Q7 15 6 10M14 2Q9 2 10 7T15 13', '#444', 1.300);
const projection = p('M1 13l3-5h11l-3 6q-5 1-11-1z', 'url(#blue)') + ln('M4 2h8', INK, 1.500) + p('M7 2h2v4h2l-3 4-3-4h2z', '#e8902c');
const key = c(5, 11, 2.500, '#ffe060', '#a87c10') + ln('M7 9l5-5', '#d0a020', 2);

const icons = {
    nx: c(9, 9, 5.500, '#3aa0e8') + ln('M2 11Q8 17 14 8Q15 4 12 4', '#f0c830', 2.500) + p('M0 1l10 1-5 8z', '#c0182c') + p('M0 1l3 6 2 3 2-7z', '#701020') + c(10, 8, 1.500, '#e8f8ff'),
    part: p('M3 4l6-3 6 3v7l-6 4-6-4z', '#2a62d8') + p('M3 4l6-3 6 3-6 4z', '#6fa4f4') + p('M0 9l5-1 5 4-5 3z', '#1a3c90'),
    wmin: p('M4 10h9v2.500H4z', '#fff'),
    wrestore: ln('M4 8h6v4H4zM7 8V4h6v5h-3', '#fff', 1.600),
    wclose: ln('M4 4l8 8M12 4l-8 8', '#fff', 2),
    mmin: p('M4 11h7v2H4z', '#77746a'),
    mrestore: ln('M3 8h7v5H3zM6 7V4h7v6h-2', '#77746a', 1.500),
    mclose: ln('M4 4l8 8M12 4l-8 8', '#77746a', 2.200),
    redg: p('M12 1l4-1-1 4q-1 2-3 2L8 8h5q0 8-6 7Q1 15 1 10 2 5 8 4q2-3 4-3z', '#e00c0c') + ln('M8 7Q4 7 4 10q1 4 6 1', '#fff', 1.200),
    new: p('M2 1h8l4 4v10H2z', '#fbfdff', '#8ea4d0') + p('M10 1v4h4z', '#c8d6f2'),
    open: p('M1 5h5l1 2h7v7H1z', '#f0c848', '#b08a20', .7) + p('M4 8h12l-3 6H1z', '#ffe88a') + ln('M8 4q2-4 5-1M13 1v3h-3', '#30a030', 1.500),
    save: p('M1 2h13l1 1v11H1z', '#3858c0') + p('M4 2h8v5H4z', '#fff') + p('M4 10h8v4H4z', '#1c2c60') + p('M9 11h2v3H9z', '#eee'),
    cut: ln('M14 5L2 9M9 1v8', '#a9a89e', 2) + c(4, 11, 2, 'none', '#a9a89e', 1.500) + c(9, 12, 2, 'none', '#a9a89e', 1.500),
    copy: p('M1 2h6l2 2v7H1zM7 6h5l3 3v6H7z', '#a9a89e'),
    paste: p('M1 3h4V1h4v2h3v2h3v9H4v-1H1z', '#a9a89e'),
    del: ln('M3 3l10 10M13 3L3 13', '#333', 2),
    undo: ln('M3 8Q6 2 11 4q4 4-1 9', '#14205c', 2.200) + p('M1 5l1 7 6-4z', '#14205c'),
    fit: p('M1 2h14v13H1z', '#cfe0fc', '#2c58b8') + p('M1 2h14v2H1z', '#2c58b8') + ln('M5 7l6 6M11 7l-6 6', '#e87818', 2),
    gray: p('M1 2h13v13H1z', '#a9a89e'),
    zoomrect: p('M1 2h14v12H1z', '#d6e6fc', '#2c58b8', 1.500) + c(8, 8, 3.500, '#fff', '#555') + ln('M10 10l4 4', '#30509c', 2),
    magnify: c(6, 6, 5, '#eef4f8', '#666', 1.500) + ln('M4 6h4M6 4v4', '#333', 1) + ln('M10 10l5 5', '#555', 2.500),
    rotate: ln('M2 10Q0 4 6 2q4-1 6 2M14 6q2 6-4 8-4 1-7-2', '#18307c', 2) + p('M10 5h5V1zM6 11H1v4z', '#18307c'),
    pan: p('M1 2h14v11H1z', '#d8e4f8', '#8ea4d0') + p('M6 9l2 1V7l2 1 1-1 1 1 2 0v5l-2 3H9z', '#f8c890', '#c8863c', .6),
    shade: cube(1, 4, 12) + ln('M10 6l5-5', '#888') + dots([14, 2]),
    rainbow: p('M3 4l3-2 1 2 4-2 5 1-3 9-3-1-2 3-3-2-4 1z', 'url(#rain)'),
    layer1: layers + p('M7 7h8v8H7z', '#e6ecfc', '#7088c8', .7),
    layer2: layers + p('M8 9h8v6H8z', '#7cd0f0', '#3888b8', .7),
    layer3: layers + ln('M3 14h8', '#333'),
    layer4: p('M1 4l4-3 10 1-4 3zM1 13l4-3 10 1-4 3z', '#d8ead8', '#4e7a62', .8) + p('M5 7l3-2 3 2-3 2z', '#e0782c'),
    wcs: axes,
    wcsdyn: axes + p('M8 4l6-4 2 2-5 4z', '#3c78e0', '#183c90', .6),
    wcsbox: ln('M2 3h3v9l8 2M4 3l8 9-4-8 5 3', RED) + p('M1 2h3v3H1zM1 11h3v3H1zM11 12h3v3h-3zM11 5h2v2h-2z', '#333') + p('M6 6h3v3H6z', '#a07050'),
    wcsrot: axes + ln('M8 5q1-4 5-3 3 2 0 5-3 1-4-2', '#2050b0', 1.500),
    wcsori: ln('M6 1v7l7 0M6 4h9', RED, 1.500) + ln('M4 7v6l6 2M4 13l5-5', '#777', 1.200) + p('M12 1l3 3-3 2zM1 2h3v2H1z', RED),
    wcssave: ln('M8 2v7', '#2040b0', 1.500) + p('M6 3l2-3 2 3z', '#2040b0') + ln('M8 8l7-4', '#20a030', 1.800) + ln('M8 9l7 1', RED, 1.500) + letter('RAW', 7, 16, INK, 'small'),
    wcskey: p('M6 1h9v11H6z', '#9db0e0', '#667') + ln('M13 6H8v5', '#fff') + key,
    swap1: stack2 + p('M10 1l4 1-1 4-2-1zM1 12l3-2 2 4z', '#e07818'),
    swap2: stack2 + p('M10 2h5v2h-5zM1 10l4 0 1 4z', '#e07818') + dots([11, 4]),
    swap3: stack2 + p('M1 14h5l1-3z', '#e07818'),
    measure: p('M1 8h14v5H1z', '#ffe88a', '#a88828') + ln('M1 4h14M1 1v6M15 1v6', '#2848a8', 1.500),
    angle: p('M3 1l12 11-2 3L2 4z', '#ffe88a', '#b09030') + ln('M2 5v10h10M2 9q5 1 6 6', RED),
    link: `<g transform="rotate(-15 8 8)">` + [[6, 1, '#a07c10'], [6, 10, '#a07c10'], [7, 5.500, '#d8b430']].map(([x, y, col]) => `<rect x="${x}" y="${y}" width="3.500" height="5.500" rx="1.700" fill="none" stroke="${col}" stroke-width="1.600"/>`).join('') + '</g>',
    line: ln('M2 14L14 2', PURPLE, 1.500) + dots([2, 14], [14, 2]),
    ucs: ln('M5 1v9l9 4M5 10L1 14M5 10l8-6', '#667', 1.300) + p('M3 3l2-3 2 3z', '#667') + dots([9, 11], [3, 12]),
    parallel: ln('M1 13L12 2', PURPLE, 1.500) + ln('M5 14L15 4', RED, 1.500),
    tan1: ln('M1 13L9 4', PURPLE) + c(12, 6, 3.500, 'none', RED, 1.300) + dots([1, 13], [9, 4]),
    tan2: c(4, 11, 3, 'none', RED, 1.300) + c(12, 5, 3, 'none', RED, 1.300) + ln('M2 8l8-5', PURPLE),
    boxpts: p('M4 4l9-1v9l-9 1z', '#9cc4f4', '#4468b0') + ln('M2 2v12M15 1v12M1 4h14M1 13h14', '#557') + dots([2, 4], [13, 3], [2, 12], [14, 12]),
    arc1: ln('M3 3Q10 3 12 14') + dots([3, 3], [9, 6], [12, 13]),
    arc2: ln('M2 2l12 11', RED) + ln('M4 3Q11 6 12 13') + dots([4, 3], [12, 12]),
    corner: ln('M1 3h14M13 1v13M1 13h8') + ln('M7 3q6 0 6 5 0 5-5 5', RED, 1.500),
    corner2: ln('M1 4h14M12 1v13') + ln('M2 4h5q5 2 5 8', RED) + ln('M12 5L6 9', RED),
    circ1: circ + c(8, 8, 1, RED) + dots([3, 5], [13, 6], [8, 2]),
    circ2: circ + c(8, 8, 1, RED) + ln('M5 1l10 9', RED) + dots([12, 12]),
    circ3: circ + c(8, 8, 1, RED) + ln('M1 2h14M14 1v13M2 14h10', RED),
    circ4: c(7, 9, 5, 'none', PURPLE, 1.400) + ln('M2 2h12v12M7 9l5-4', RED),
    circ5: circ + c(8, 8, 1.500, RED),
    circ6: circ + ln('M7 9l5-4', RED) + dots([7, 9], [12, 5]),
    circ7: circ + c(8, 8, 1.300, RED) + ln('M9 1l6 6', RED),
    sketch: ln('M1 1h6v6H1zM1 9h6v6H1zM9 9h6v6H9z', '#444', 1.600) + ln('M8 9l6-7', '#e0b020', 2.500),
    extrude: p('M1 3h12v11H1z', 'url(#pale)', '#4468c0') + ln('M5 3v11M9 3v11', '#fff', 2) + ln('M1 2h13', '#e0a030', 1.500),
    revolve: p('M1 4l5-3 9 2v5l-4 1v6H7V9L1 7z', 'url(#pale)', '#6888d0', .7) + p('M8 5l6-2v6l-3 1v5H8z', 'url(#gold)') + ln('M1 4l5-3 9 2', '#e0a030'),
    sweep: p('M2 9q0-7 6-7 6 1 6 9h-4q0-5-3-5t-2 6z', '#f6f0fa', '#a080b8') + dots([3, 11], [9, 8]),
    tube: p('M3 7l8-4q4 1 4 5l-8 5z', '#7084b8', '#344880') + c(5, 10, 3, '#dce4f4', '#344880', 1.500),
    hole: cube() + c(6, 10, 2.200, '#e08a20', '#703808', .8),
    boss: cube(3, 1, 12) + p('M1 8h6v5q-3 2-6 0z', 'url(#gold)', '#c08820', .7),
    pocket: cube() + p('M4 8h4v4H4z', '#c46414'),
    pad: cube() + p('M3 7h6v6H3z', 'url(#gold)'),
    slot: p('M1 7l7-5 7 4v4l-7 5-7-4z', 'url(#pale)', '#6a8cd8', .7) + `<ellipse cx="8" cy="7" rx="4" ry="2.200" fill="#f4b850" stroke="#b87820"/>`,
    groove: cube() + p('M4 8h6v3H4z', '#e88a24'),
    cyl3: cylinder() + p('M4 6h8v2H4z', '#1c44a8'),
    rib: p('M1 14l4-6h10l-3 6z', 'url(#blue)') + p('M2 2l3-2h10l-3 4H4z', 'url(#orange)') + p('M7 4h3v5H7z', '#e8a040'),
    flangec: p('M7 3h8v10H7z', 'url(#pale)', '#3868a8') + ln('M1 3l4 5-4 5M1 8h7', '#d8641c', 1.500),
    thru: p('M1 5q7-5 14-1v4Q8 5 2 10z', 'url(#rain)') + dots([2, 12], [13, 12]),
    shell: cube() + ln('M2 5h9v9M3 14h10l2-9', '#e8c020', 1.200),
    thread: cylinder() + ln('M8 5v8', '#e07820', 2),
    wcsp: p('M2 7q6-3 12 0l-2 6H2z', 'url(#pale)') + ln('M4 1v12h8M4 9l9-6', RED) + dots([13, 3], [12, 13]),
    block: cube(),
    cyl: cylinder(),
    cone: p('M8 0l6 12q-6 4-12 0z', 'url(#blue)'),
    sphere: c(8, 8, 6.500, 'url(#gold)', '#c8b830'),
    circline: c(5, 6, 4, 'none', '#444', 1.300) + ln('M6 15l8-12', '#444') + dots([13, 4], [7, 13]),
    spline: ln('M1 9Q4 4 8 8t7-1', '#333', 1.500),
    text: letter('A', 8, 14, '#111', 'serif'),
    point: ln('M1 9h12M7 3v12', '#555') + c(12, 4, 3, '#ffec40'),
    rect: ln('M2 3h12v10H2z', '#333', 1.500) + dots([2, 3], [14, 13]),
    hex: ln('M4.500 2h7L15 8l-3.500 6h-7L1 8z', '#333', 1.300) + dots([8, 8]),
    ellipse: `<ellipse cx="8" cy="8" rx="7" ry="4.500" fill="none" stroke="#333" stroke-width="1.300"/>` + dots([8, 8]),
    conic: p('M8 0l6 13q-6 4-12 0z', 'url(#gold)') + p('M1 8l5 2 9-3-3 7-8 1z', 'url(#pale)', '#5078d0', .7),
    helix: [4, 7, 10, 13].map(y => `<ellipse cx="8" cy="${y}" rx="6.500" ry="2.500" fill="none" stroke="#5874a8" stroke-width="1.200"/>`).join(''),
    xyz: letter('XYZ=', 8, 6, RED, 'small') + ln('M1 12q4-4 7-1t7-2', '#333', 1.400),
    offset: ln('M2 14V4q6-6 9 0 5 1 4 10z', '#a04848', 1.200) + ln('M5 12V6q3-4 5 1 3 1 2 5z', '#a04848', 1.200),
    bridge: ln('M1 12Q5 8 7 8t4-1 2-5', '#777', 1.500) + dots([5, 9], [8, 5], [11, 11]),
    join1: joinLines + p('M6 6h4v4H6z', '#e86020'),
    join2: joinLines + dots([8, 8], [11, 8]),
    join3: joinLines + p('M7 6l4 2-4 3z', RED),
    proj: projection,
    wrap: p('M2 2h5v11l-5 2zM9 1h5v11H9z', '#fff4c0', '#c8a428') + p('M6 4h4v8H6z', '#f0b0b0'),
    section: p('M3 2h11l-2 12H1z', 'url(#pale)', '#5078c8') + ln('M7 3q5 3 3 9', '#30509c'),
    fold: p('M2 2q6 3 12 0-1 5 0 9-6 2-9-1-3-3-3-8z', 'url(#gold)') + p('M4 8q6 3 10 1v5q-6 2-8-1z', '#5c8cf0'),
    union: p('M1 6h10v9H1z', '#1c8474') + c(10.500, 5.500, 5, '#1c8474', '#0c5c50'),
    subtract: p('M1 6h9v9H1z', '#1c8474') + c(10.500, 5.500, 4.500, '#f4f2e8', '#4c5c58', 1.200),
    draft: cube() + p('M4 14L14 2l1 2-9 12z', '#ecd040'),
    diamond: ln('M1 9l7-5 7 5-7 5z', '#555') + cube(4, 2, 8),
    edge: cube() + p('M2 5l4-4h9l-4 4z', 'url(#orange)'),
    blend1: p('M9 1h4q2 8-1 13H2q0-4 4-4t3-9z', 'url(#gold)') + p('M9 1l2 9-9 4q0-4 4-4t3-9z', '#f0a050'),
    blend2: p('M9 1h4q2 8-1 13H2q0-4 4-4t3-9z', '#f8d8a0') + p('M9 1l2 9-9 4q0-4 4-4t3-9z', '#e88a38'),
    chamf: p('M1 4h9v11H1z', 'url(#pale)', '#6888d0', .7) + p('M1 4l4-3 10 3-5 3z', '#f0a048') + p('M10 7l5-3v11h-5z', '#f8e080'),
    trimb: p('M1 6l8-5h6v13H7V9H1z', 'url(#blue)') + p('M1 6h6v4H1zM9 5h5v4H9z', 'url(#orange)'),
    slab: p('M5 1h6v14H5z', '#f2f4f8', '#778') + ln('M5 4h6M5 7h6M5 10h6M5 13h6', '#889'),
    split: p('M1 2h4v12H1zM6 2h4v12H6zM11 2h4v12h-4z', 'url(#blue)', '#2850b0', .6),
    emb: box(1, 3, 13, '#fff0a0', '#fffbe0', '#e8b828') + ln('M1 8l4-5 10 0M1 8h9v7M1 8v8h9', '#e07820', 1) + ln('M4 1l4 3 4-3', RED),
    pipe: p('M8 1h6v8l-5 5H2v-5l6-2z', 'url(#orange)') + p('M2 8h6v7H2z', 'url(#blue)'),
    sheet1: p('M1 5l2-2h12v7l-2 2H1z', 'url(#pale)', '#5080c0') + ln('M8 3v9', '#5080c0'),
    sheet2: p('M1 6l6-4 8 3-6 4zM1 11l6-4 8 3-6 4z', '#dce6fc', '#5878b8'),
    stack: p('M1 4l5-3 6 2-5 3zM3 8l5-3 6 2-5 3zM3 12l5-3 6 2-5 3z', '#a8c0f0', '#4464a8', .8) + dots([13, 5], [12, 10]),
    unite1: p('M1 5l3-3h7v9l-2 2H1z', 'url(#pale)') + p('M7 5l2-2h6v8l-2 2H7z', 'url(#orange)'),
    editc: c(8, 6, 5.500, 'none', '#444', 1.300) + ln('M1 7h14', RED) + key,
    editp: p('M7 1h7v9H7z', '#e4e4f4', '#8890b0') + key,
    trimc: ln('M1 9h14', '#111', 1.800) + ln('M4 2q7 3 8 12', RED, 1.300) + ln('M6 3q6 3 9 9', RED, 1),
    divide: ln('M13 1Q7 2 8 8t-6 6', '#333', 1.500) + ln('M10 1v12M5 4h7', RED),
    arcs: ln('M2 13q7-2 7-11', '#333', 1.400) + ln('M8 14q5-3 4-12M12 14q3-4 2-12', RED),
    stretch: ln('M1 3q7 3 14-1M3 14q2-4 7-2l5 1', '#333', 1.500) + p('M7 4h3v5h2l-4 3-3-3h2z', '#e85020'),
    surf: p('M1 3q6 3 14-1l-1 11q-4-2-6 1-3-2-5 0 1-6-2-11z', 'url(#pale)', '#6078d8', .8) + ln('M2 7q6 2 12-1M6 4q2 4 1 9M10 4q1 3 1 8', '#6c84dc', .6),
    surfr: p('M3 4l8-3 4 7-8 6z', '#f4f4fc', '#888') + ln('M1 6l5 9M10 1l5 7', '#e05830', 1.800) + dots([3, 4], [12, 2], [6, 13]),
    ribbon: p('M1 10l10-8h4v5L6 14H1z', '#fff0b8', '#a87828') + ln('M1 11L13 3M3 13L15 5', '#a87828'),
    mesh: p('M1 8l8-6 6 5-8 7z', '#c8e8f8', '#4890b8') + ln('M3 6l6 6M6 4l6 6M3 11l9-6', '#e07030'),
    swept: p('M1 3h13l-2 10H2z', 'url(#pale)', '#4870c8') + c(8, 8, 3, '#d4e8fc', '#4870c8'),
    nsided: p('M10 0h3l-1 9 3 5H4q-1-4 3-5z', 'url(#gold)') + p('M1 10h5l7 4H3z', '#5888f0'),
    quilt: p('M1 5l5-4 9 4v6l-4 4-10-5z', '#ece4fc', '#8068b8') + ln('M4 3l9 6M2 7l10 6M6 3v8M10 5v8', '#c070a0', .8),
    surf2: p('M1 4l5 2 2-4 6 1v9l-5-1-2 3-6-2z', 'url(#pale)', '#4870d0', .7),
    sheetb: p('M1 3h9l5 3v8H6z', '#f0b040', '#b07818', .7) + p('M1 3h9l5 3H5z', '#40a898') + p('M6 9h9v2H6z', '#fff'),
    copyb: p('M1 1h7v10H1z', 'url(#blue)') + p('M8 4h7v10H5v-3h3z', 'url(#orange)', '#a86818', .6),
    fill1: p('M6 1l8 6-3 7H1l3-6z', 'url(#blue)') + ln('M6 1l3 5', RED, 2),
    orange: p('M6 1h8v11l-5 3H1v-5h5z', 'url(#orange)', '#c87018', .5),
    surfv: p('M2 8l4-2 3 2 4-3v7l-4 3-3-2-4 2z', 'url(#pale)', '#5064b8') + ln('M10 5l4-4', RED, 1.500) + dots([3, 8]),
    sheetq: p('M2 2q6-2 11 1v11q-5-3-11 0z', '#f8d080', '#b87830') + ln('M7 2v10M2 7q6-2 11 1', '#b87830', .8) + p('M10 11h4v3h-4z', '#50a850'),
    chk: p('M2 9l5-3 8 3-5 5z', 'url(#pale)', '#4060b0') + ln('M1 3l2 2 4-4', '#18a830', 2) + ln('M5 13l9-10M8 4l5 8', '#304890'),
    cap: p('M1 9q6-8 14-1l-6 7z', 'url(#pale)', '#5068b8') + ln('M3 6q5-5 9-1l3 4', '#d84040', 2),
    tracks: ln('M1 3l13 5M2 1l13 5', '#333', 1.300) + p('M1 9l4-1 10 4-3 2z', '#4870d8'),
    comb: p('M1 9h14v5H1z', '#fff4c8', '#b88838') + ln('M2 9V4l3-2v6M7 8V3l4-1v6M13 8V2', '#d06060'),
    bend: p('M1 5h6l7-3 1 5-7 7-3-1z', 'url(#pale)', '#5878c0', .8) + ln('M2 5l6 2 7-4', '#e09070'),
    ball: p('M2 9Q3 1 12 2q4 5 3 12-9 2-13-5z', 'url(#rain)') + p('M8 8h6v2h-6z', '#222') + dots([13, 13]),
    curvea: ln('M1 6Q9-1 15 12', '#3858c0', 1.400) + ln('M2 10Q9 3 12 14', '#444') + dots([3, 3], [12, 4]),
    comb2: ln('M2 14Q4 7 15 7', '#555', 1.200) + ln('M3 11L1 6M5 9L3 3M7 8L7 2M10 7l1-6M13 7l2-5', RED, 1),
    pullb: p('M1 7l4 1 2-3 7 2v7H2z', 'url(#blue)') + p('M7 0l4 0v6H7z', '#f0b040'),
    wave: p('M1 13L5 3q2-1 3 1t4-2l3 1-3 10q-2 1-3-1t-4 2z', '#a4c4a8', '#608868') + ln('M8 4l-3 9M12 3L9 12', '#608868', .8),
    loupe: c(7, 8, 4.500, '#f2f2f0', '#555', 1.300) + ln('M10 11l5 4', '#555', 2.500) + p('M3 2h8v2H3zM4 13h4v3H4z', '#e07020'),
    sq: ln('M1 3h9v9H1zM4 5h10v9H4z', '#e08080') + p('M6 6h6v5H6z', '#ffe880', '#e07070'),
    filter: ln('M1 5h9M5 0v9', '#444', 1.500) + c(5, 5, 2.500, 'none', '#444') + p('M7 6h8l-3 4v4l-2-1v-3z', '#f4d020', '#a88c10', .6),
    graytool: p('M0 3q2-3 5-2l6 2v5l-2 1V6L3 4z', '#aaa79c') + p('M11 8h5v6h-5z', '#aaa79c') + ln('M9 7v8', '#aaa79c'),
    s1: ln('M1 14L14 2', '#9c9488', 1.200) + c(14, 2, 1.500, '#9c8484'),
    s2: ln('M1 14L15 2', '#9c9488', 1.200) + c(8, 8, 1.500, '#8c7474'),
    s3: ln('M1 1q7 0 6 7 0 6 7 6', '#9c9488') + c(7.500, 8, 1.500, '#8c7474'),
    s4: ln('M0 11q8-7 16 0M8 1v14', '#9c9488', 1.200) + c(8, 7.500, 1.500, '#8c7474'),
    s5: c(8, 8, 7, 'none', '#9c9488', 1.200) + c(8, 8, 1.300, '#8c7474'),
    s6: c(8, 8, 6.500, 'none', '#9c9488', 1.400) + [[8, 1], [8, 15], [1, 8], [15, 8]].map(q => c(q[0], q[1], 1.500, '#8c7474')).join(''),
    s7: ln('M2 8h12M8 2v12', '#9c9488', 1.200),
    flange: shadow + p('M3 2l5-2 5 3-4 2v9l-6-4z', 'url(#blue)', '#6898d8', .5),
    inset: shadow + p('M1 3l9-2 5 5-7 3z', '#e8eefc', '#6888c8', .7) + p('M4 3l7 3-2 4-3-2z', '#f07048') + p('M3 6l5 3v6l-5-4z', '#f8d848', '#c89820', .5),
    bracket: shadow + p('M10 0l5 1v8l-6 5H1l1-5h4l3-2z', 'url(#gold)', '#b88818', .5) + p('M1 10l5-1 3 1-2 4H1z', '#80a8f0'),
    genflange: shadow + p('M2 2l5-1v2l4-1 3 2-2 2 2 8-4-2-3 2-5-2z', 'url(#blue)', '#5080d0', .5) + ln('M7 3v10M10 5v8', '#dce8ff', .8),
    smbridge: shadow + p('M5 1h9q-3 5-1 9l-3 4H1q4-2 4-6z', 'url(#blue)', '#5080d0', .5),
    bead: shadow + p('M1 6l5-3h9l-5 4H1z', '#d4e6ff', '#6898d8', .5) + p('M1 7h9v7H1z', 'url(#pale)', '#6898d8', .5) + p('M10 7l5-4v3l-5 8z', '#3870d8') + p('M3 3l4-2h8l-5 3z', 'url(#gold)', '#c07020', .6),
    punch: shadow + p('M1 4l14-3q-4 3-3 7l-4 6H1z', 'url(#blue)') + `<ellipse cx="8" cy="5" rx="4" ry="2.500" fill="#e8901c"/>`,
    smhole: shadow + p('M2 4l13-3q-4 3-3 7l-4 6H1z', 'url(#pale)', '#6890d8', .5) + c(8, 6, 2.800, '#f8f8fa', '#d88058'),
    global: p('M1 6l3-5 11 2-3 6z', '#e4e4ff', '#5858c0') + ln('M4 7l8-4M6 1l3 8', '#8080d8', .7) + c(3, 11, 2, '#f08820') + c(8, 13, 2, '#e87018') + c(13, 12, 2, '#e87018'),
    fourpt: p('M2 5l12-3v9L3 14z', 'url(#pale)', '#8890c8') + dots([2, 4], [14, 2], [14, 12], [2, 14]),
    studio: p('M1 8Q4 3 9 2l6 4q-6 2-7 8z', '#c4ecd8', '#2c8860') + ln('M4 5q6 1 8 3M9 2q-4 3-5 8', '#2c8860', .8),
    studio2: p('M1 8Q4 2 9 2l6 4q-5 1-7 8z', '#c4ecd8', '#2c8860') + ln('M3 8q1-4 7-5', '#fff', .8),
    poles: p('M2 5q5-5 12 2l-5 7H3z', '#fce8a0', '#a05090') + ln('M3 2l5 4 5 0M5 14l7-5', '#c050a0') + dots([3, 2], [9, 2], [15, 7], [5, 14], [8, 8]),
    enlarge: p('M1 8Q4 2 9 1l6 5q-5 2-7 8z', '#f4d8dc', '#b05060', 1.400) + p('M4 8q2-4 5-4l3 2-4 5z', '#dce4fc', '#8090c8'),
    normals: p('M1 5l5-2v8l-5 3zM9 5l2 1 4-3v9l-4 2-2-1z', 'url(#blue)', '#4c78c8', .5) + ln('M7.500 1v14', '#c08020', 2) + p('M5 3l2.500-3L10 3z', '#e0a030'),
    pin: `<g transform="rotate(40 8 8)">` + p('M5 1h6v7H5z', '#e8e040', '#222', 1.500) + p('M3 8h10v2H3z', '#8a8410', '#222') + ln('M8 11v5', '#222', 1.500) + '</g>',
    sort: p('M8 2l6 11H2z', 'none', '#bbb8a8', 1.400),
    views: ln('M8 1l6 3v7l-6 4-6-4V4zM8 1v14M2 4l6 4 6-4', '#208868', 1.200) + ln('M6 14l9-3', RED, 2),
    folder2: p('M1 4h5l1 2h6v8H1z', '#f0ec60', '#333') + p('M4 8h12l-3 6H1z', '#84801c', '#222'),
    model: ln('M3 5h9v9H3zM5 5l2-4h8v9l-3 3', '#1c2c9c', 1.300) + p('M5 7h5v5H5z', '#ffec60', '#222') + p('M1 3h3v3H1zM10 3h3v3h-3zM1 12h3v3H1zM10 12h3v3h-3zM13 0h3v3h-3z', '#1c2c9c'),
    solid: p('M1 3l6-3 5 2v3l3 2v6l-4 3-4-2-6-3z', '#fbf7c0', '#111') + ln('M1 4l5 2 5-3M6 6v8M6 8l4 2v6M10 10l5-3', '#111', .9) + p('M10 10l5-3v5l-5 4z', '#999'),
    sew: p('M1 4q3-3 6 0v9q-3-3-6 1zM9 4q3-3 6 0v10q-3-4-6-1z', '#fff', '#222') + ln('M8 4v10', RED, 1.500),
    tcm: p('M1 6Q6-1 15 5L9 15Q9 7 1 6', '#fff', '#222') + ln('M4 3q7 1 7 8M8 2q5 2 5 6M3 7q3-5 9-4M7 9q3-4 7-4', '#222', .8),
    chevl: ln('M10 4L6 8l4 4', '#24409c', 2.500),
    chevr: ln('M6 4l4 4-4 4', '#24409c', 2.500),
    asmnav: ln('M3 5v8h5M8 5h7M12 13h4', '#888') + gold(0, 1, 6) + gold(7, 9, 6),
    partnav: ln('M3 6v8h4M7 6h8M12 14h4', '#888') + p('M1 1h5v6H1z', '#e09090', '#a05050') + p('M7 11h5v4H7z', '#e8d8d8', '#a08080'),
    web: p('M2 1h9l3 3v11H2z', '#fff4c0', '#a8a070') + c(8, 9, 4, '#2870d8') + p('M7 6l3 2-2 3-2-1z', '#40b040'),
    cap2: p('M0 4l8-3 8 4-8 4z', '#555c68') + p('M4 7l4 2 4-2v4l-4 1-4-2z', '#3c4048') + ln('M5 8v7l-2-3', RED, 1.500),
    help: p('M1 1h13v12h-2l1 3-4-3H1z', '#fff8a0', '#a89c50') + letter('?', 8, 12, '#20349c', 'sans'),
    clock: c(8, 8, 7, '#dce6f0', '#7a8490', 1.600) + ln('M8 3v5h4', '#406090', 1.500),
    palette: p('M0 3l4-2v12l-4 1z', '#f0f4fa', '#7088a8') + p('M5 1h10v13H5z', '#fff', '#7088a8') + p('M7 3h2v2H7z', RED) + p('M7 6h2v2H7z', '#2850c0') + p('M7 9h2v2H7z', '#20a040') + ln('M10 4h4M10 7h4M10 10h4', '#777'),
    jack: c(12, 3, 3, '#f4e090') + ln('M3 1v13M1 7l12-1M1 11h7M8 8l7 6', '#2c34a0', 2.500) + ln('M10 2l3 3', '#8088c8', 2),
    people: c(11, 4, 3, '#e09040') + p('M6 12q0-5 5-5t5 5z', '#50a040') + c(5, 7, 3, '#a05838') + c(5, 8, 2, '#f0c090') + p('M0 16q0-6 5-6t5 6z', '#9048a0'),
    addcomp: gold(1, 1, 7) + gold(3, 8, 7) + ln('M13 1v6M10 4h6', '#2858c8', 1.500),
    parent: p('M1 5l6-4 2 8z', '#eed86c') + ln('M8 3v10h3', '#a88c30') + gold(9, 4, 5) + gold(10, 10, 5),
    mate: p('M1 1l6 3-6 3z', '#2020b0') + p('M15 1L9 4l6 3z', '#7020b0') + ln('M8 0v8', '#222') + p('M1 9h6v6H1z', '#ffec60', '#a89020') + p('M9 8l7 7H9z', '#d82020'),
    repos: gold(4, 4, 9) + ln('M3 13l3-3M11 5l4-4M11 1h4v4M1 10v5h4', '#3058b8', 1.500),
    mirror: gold(7, 6, 8) + p('M2 3l7-2v6l-7 5z', '#fbe89c', '#c8a030') + ln('M4 1v12', '#c8a030'),
    suppress: gold(5, 1, 8) + c(12, 5, 3, '#8cb0f0') + key,
    arrange: gold(7, 1, 6) + gold(11, 6, 5) + key,
    explode: gold(1, 0, 6) + gold(2, 9, 6) + gold(9, 9, 6),
    sequence: p('M9 1h5v5H9zM5 6h5v5H5z', '#fff', '#888') + gold(2, 10, 6),
    workpart: p('M2 5l5-3h5v8l-4 4H2z', '#f0f0e8', '#888') + gold(6, 1, 8) + ln('M9 14h3', '#333'),
    disppart: p('M3 1h13v11H3z', '#e4ecfc', '#3058b8') + p('M3 1h13v2.500H3z', '#3058b8') + gold(5, 4, 7) + ln('M1 7l4 8h4', '#888'),
    clearance: ln('M3 2h8M3 0v3M11 0v3', '#e06020', 1.500) + box(2, 4, 9, '#ffe868', '#fff4a0', '#e0b830') + ln('M2 9h7M6 7v6', '#b89020') + ln('M8 11l3 3 4-6', '#28a830', 2),
    winflag: p('M2 3q3-2 6 0L7 8Q4 6 1 8z', '#e85828') + p('M9 3q3 2 6 0l-1 5q-3 2-6 0z', '#68b838') + p('M1 9q3-2 6 0l-1 5Q3 12 0 14z', '#4890e8') + p('M8 9.500q3 2 6 0l-1 5q-3 2-6 0z', '#f8c828'),
    ie: c(8, 8, 5, 'none', '#5cc0f8', 2.500) + ln('M4 8h8', '#5cc0f8', 2) + ln('M1 14Q0 10 8 5t7-4-1 5', '#bce8ff', 1.300),
    swirl: c(8, 8, 7, '#e4e4e4') + ln('M8 8q-2-2 1-2 3 1 1 4t-6 0 2-8l7 0', '#555', 1.300) + p('M11 0l4 1-3 3z', '#eee'),
    outlook: p('M1 3l8-2 3 2v10l-3 2-8-2z', '#b8e0fc', '#4898d8') + ln('M9 5q-5 0-5 3t4 3V8h6', '#1868b8', 1.500) + ln('M11 2l4 3', '#f0a020', 2),
    folder: p('M1 3h5l2 2h7v9H1z', '#f0c850', '#b08a20', .7) + p('M1 7h14v7H1z', '#ffe898'),
    pccad: p('M0 0h16v16H0z', '#fff') + ln('M1 5h10l3-3v8H9M2 5l2 5', '#1c2c9c', 1.500) + c(8, 6, 3, 'none', '#222', 1.500) + dots([9, 14], [12, 14], [15, 14]),
    bluea: p('M1 1h14v14H1z', '#2c8ce4', '#9ccaf8') + letter('A', 8, 13, '#fff', 'sans'),
    keyboard: p('M1 6h14v8H1z', '#eee', '#111') + ln('M3 8h11M3 10h11M3 12h11', '#222', 1) + ln('M8 5q0-2 3-3', '#222'),
    trayleft: ln('M10 4L6 8l4 4', '#c8d8ff', 1.500),
    shield: p('M8 1q4 2 7 1 0 9-7 13Q1 11 1 2q3 1 7-1z', '#d83028', '#f4c8c8') + ln('M8 4v7M4.500 7h7', '#fff', 2),
    network: p('M6 1h9v7H6z', '#3858a8', '#b8c4e4') + p('M1 6h9v7H1z', '#2c3c70', '#b8c4e4') + p('M3 14h6v1.500H3z', '#ccc')
};

const svg = name => `<svg viewBox="0 0 16 16" width="16" height="16" aria-hidden="true">${icons[name] || ''}</svg>`;

// toolbar tokens: | separator, v small drop arrow, V big drop arrow, *name pressed button
function makeItem(token, last) {
    if (token === '|') return '<span class="sep"></span>';
    if (token === 'v') return `<b class="arrow${last ? ' low' : ''}"></b>`;
    if (token === 'V') return '<b class="arrow big"></b>';
    if (token === 'more') return '<button class="more" aria-label="More">»</button>';
    const on = token[0] === '*';
    const name = on ? token.slice(1) : token;
    return `<button class="ic${on ? ' on' : ''}" aria-label="${name}">${svg(name)}</button>`;
}

document.querySelectorAll('[data-items]').forEach(bar => {
    const tokens = bar.dataset.items.split(' ');
    bar.insertAdjacentHTML('beforeend', tokens.map((t, i) => makeItem(t, i === tokens.length - 1)).join(''));
});

document.querySelectorAll('i[data-icon]').forEach(el => { el.innerHTML = svg(el.dataset.icon); });

// height curves of the surface, shrinking towards the saddle
const ring = 'M0 -72C24 -72 44 -58 34 -38C22 -14 26 -6 44 4C64 16 76 34 60 52C44 72 22 84 -4 86C-36 84 -62 66 -72 44C-80 26 -50 14 -34 2C-20 -8 -28 -18 -40 -34C-52 -54 -26 -72 0 -72Z';
const rings = [];
for (let s = 1; s > 0.1; s -= 0.09) {
    rings.push(`<path d="${ring}" transform="translate(374 424) scale(${s.toFixed(2)})"/>`);
}
document.getElementById('contours').innerHTML = rings.join('');
```
